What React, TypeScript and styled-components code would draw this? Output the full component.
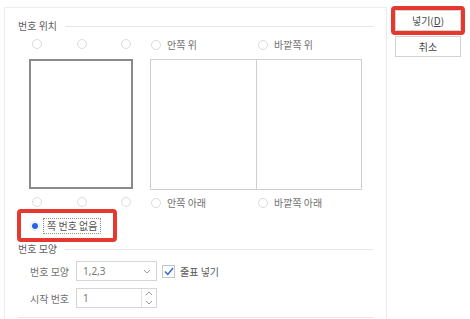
import React from "react";
import styled, { createGlobalStyle } from "styled-components";

const Global = createGlobalStyle`
  html, body { margin: 0; padding: 0; background: #fff; overflow: hidden; }
  body { font-family: "Noto Sans CJK KR", "Noto Sans", sans-serif; font-size: 10px; color: #666; }
  * { box-sizing: border-box; }
`;

const Page = styled.div`
  display: flex;
  align-items: flex-start;
  gap: 4px;
  padding: 7px 0 0 4px;
  width: 470px;
  height: 319px;
  overflow: hidden;
`;

const Panel = styled.div`
  width: 383px;
  height: 313px;
  border: 1px solid #ececec;
  padding: 0 13px 0 13px;
  display: flex;
  flex-direction: column;
`;

const SectionTitle = styled.div<{ $top: number }>`
  display: flex;
  align-items: center;
  gap: 8px;
  height: 12px;
  margin-top: ${(p) => p.$top}px;
  color: #5e5e5e;
  font-size: 10px;
  line-height: 12px;
  white-space: nowrap;
  &::after {
    content: "";
    flex: 1;
    height: 1px;
    background: #e6e6e6;
  }
`;

const PositionArea = styled.div`
  margin: 5px 0 0 11px;
  display: grid;
  grid-template-columns: 104px 212px;
  column-gap: 17px;
  row-gap: 0;
`;

const RadioRow = styled.div<{ $top: number }>`
  display: flex;
  align-items: center;
  height: 14px;
  margin-top: ${(p) => p.$top}px;
`;

const Corners = styled(RadioRow)`
  justify-content: space-between;
  padding: 0 2px 0 3px;
`;

const Split = styled(RadioRow)`
  display: grid;
  grid-template-columns: 106px 106px;
`;

const RadioItem = styled.label<{ $pad?: number }>`
  display: flex;
  align-items: center;
  gap: 6px;
  padding-left: ${(p) => p.$pad ?? 0}px;
  color: #707070;
  white-space: nowrap;
`;

const Radio = styled.span<{ $on?: boolean }>`
  width: 10px;
  height: 10px;
  border-radius: 50%;
  border: 1px solid ${(p) => (p.$on ? "#dfe6f5" : "#dcdcdc")};
  background: #fff;
  display: inline-flex;
  align-items: center;
  justify-content: center;
  flex: none;
  &::after {
    content: "";
    display: ${(p) => (p.$on ? "block" : "none")};
    width: 6px;
    height: 6px;
    border-radius: 50%;
    background: #2a62e6;
  }
`;

const PageBox = styled.div`
  margin-top: 8px;
  height: 130px;
  border: 2px solid #8a8a8a;
`;

const Spread = styled.div`
  margin-top: 8px;
  height: 131px;
  border: 1.5px solid #cfcfcf;
  display: grid;
  grid-template-columns: 1fr 1fr;
  & > div + div {
    border-left: 1.5px solid #cfcfcf;
  }
`;

const Highlight = styled.div`
  border: 4px solid #e5392f;
  border-radius: 4px;
`;

const NoneBox = styled(Highlight)`
  margin: 0 0 0 -1px;
  width: 100px;
  height: 33px;
  display: flex;
  align-items: center;
  padding-left: 9px;
  gap: 3px;
`;

const Focus = styled.span`
  border: 1px dotted #8c8c8c;
  padding: 0 3px;
  line-height: 14px;
  color: #555;
  white-space: nowrap;
`;

const FieldRow = styled.div<{ $top: number }>`
  display: flex;
  align-items: center;
  height: 20px;
  margin: ${(p) => p.$top}px 0 0 12px;
`;

const FieldLabel = styled.span`
  width: 46px;
  color: #707070;
  white-space: nowrap;
`;

const Input = styled.div`
  width: 81px;
  height: 20px;
  border: 1px solid #d6d6d6;
  display: flex;
  align-items: center;
  padding-left: 6px;
  color: #777;
  font-family: "Noto Sans", sans-serif;
  font-size: 10px;
`;

const Value = styled.span`
  flex: 1;
`;

const Chevron = styled.span`
  width: 14px;
  display: flex;
  align-items: center;
  justify-content: center;
  margin-right: 2px;
`;

const Spin = styled.div`
  width: 15px;
  height: 18px;
  border-left: 1px solid #e2e2e2;
  display: flex;
  flex-direction: column;
  align-items: center;
  justify-content: space-around;
`;

const Check = styled.span`
  width: 13px;
  height: 13px;
  margin-left: 5px;
  border: 1px solid #c6c6c6;
  display: inline-flex;
  align-items: center;
  justify-content: center;
  background: #fff;
`;

const CheckText = styled.span`
  margin-left: 5px;
  color: #555;
  white-space: nowrap;
`;

const BottomLine = styled.div`
  margin-top: 9px;
  height: 1px;
  background: #e6e6e6;
`;

const Side = styled.div`
  display: flex;
  flex-direction: column;
  margin-top: -1px;
`;

const Button = styled.button`
  width: 66px;
  height: 21px;
  border: 1px solid #d2d2d2;
  background: #fff;
  font-family: "Noto Sans CJK KR", "Noto Sans", sans-serif;
  font-size: 10px;
  color: #444;
  padding: 0;
  display: flex;
  align-items: center;
  justify-content: center;
  u { text-decoration: underline; }
`;

const CancelButton = styled(Button)`
  margin: 1px 0 0 4px;
`;

const ChevronDown = () => (
  <svg width="8" height="5" viewBox="0 0 8 5">
    <path d="M1 1 L4 4 L7 1" fill="none" stroke="#9a9a9a" strokeWidth="1" />
  </svg>
);

const ChevronUp = () => (
  <svg width="8" height="5" viewBox="0 0 8 5">
    <path d="M1 4 L4 1 L7 4" fill="none" stroke="#9a9a9a" strokeWidth="1" />
  </svg>
);

export default function App() {
  return (
    <>
      <Global />
      <Page>
        <Panel>
          <SectionTitle $top={12}>번호 위치</SectionTitle>
          <PositionArea>
            <Corners $top={0}>
              <Radio />
              <Radio />
              <Radio />
            </Corners>
            <Split $top={0}>
              <RadioItem $pad={1}>
                <Radio />
                안쪽 위
              </RadioItem>
              <RadioItem $pad={2}>
                <Radio />
                바깥쪽 위
              </RadioItem>
            </Split>
            <PageBox />
            <Spread>
              <div />
              <div />
            </Spread>
            <Corners $top={5}>
              <Radio />
              <Radio />
              <Radio />
            </Corners>
            <Split $top={5}>
              <RadioItem $pad={1}>
                <Radio />
                안쪽 아래
              </RadioItem>
              <RadioItem $pad={2}>
                <Radio />
                바깥쪽 아래
              </RadioItem>
            </Split>
          </PositionArea>
          <NoneBox>
            <Radio $on />
            <Focus>쪽 번호 없음</Focus>
          </NoneBox>
          <SectionTitle $top={1}>번호 모양</SectionTitle>
          <FieldRow $top={6}>
            <FieldLabel>번호 모양</FieldLabel>
            <Input>
              <Value>1,2,3</Value>
              <Chevron>
                <ChevronDown />
              </Chevron>
            </Input>
            <Check>
              <svg width="10" height="9" viewBox="0 0 10 9">
                <path d="M1 4.5 L3.8 7.5 L9 1" fill="none" stroke="#2c64d8" strokeWidth="1.4" />
              </svg>
            </Check>
            <CheckText>줄표 넣기</CheckText>
          </FieldRow>
          <FieldRow $top={7}>
            <FieldLabel>시작 번호</FieldLabel>
            <Input>
              <Value>1</Value>
              <Spin>
                <ChevronUp />
                <ChevronDown />
              </Spin>
            </Input>
          </FieldRow>
          <BottomLine />
        </Panel>
        <Side>
          <Highlight>
            <Button>
              넣기(<u>D</u>)
            </Button>
          </Highlight>
          <CancelButton>취소</CancelButton>
        </Side>
      </Page>
    </>
  );
}
